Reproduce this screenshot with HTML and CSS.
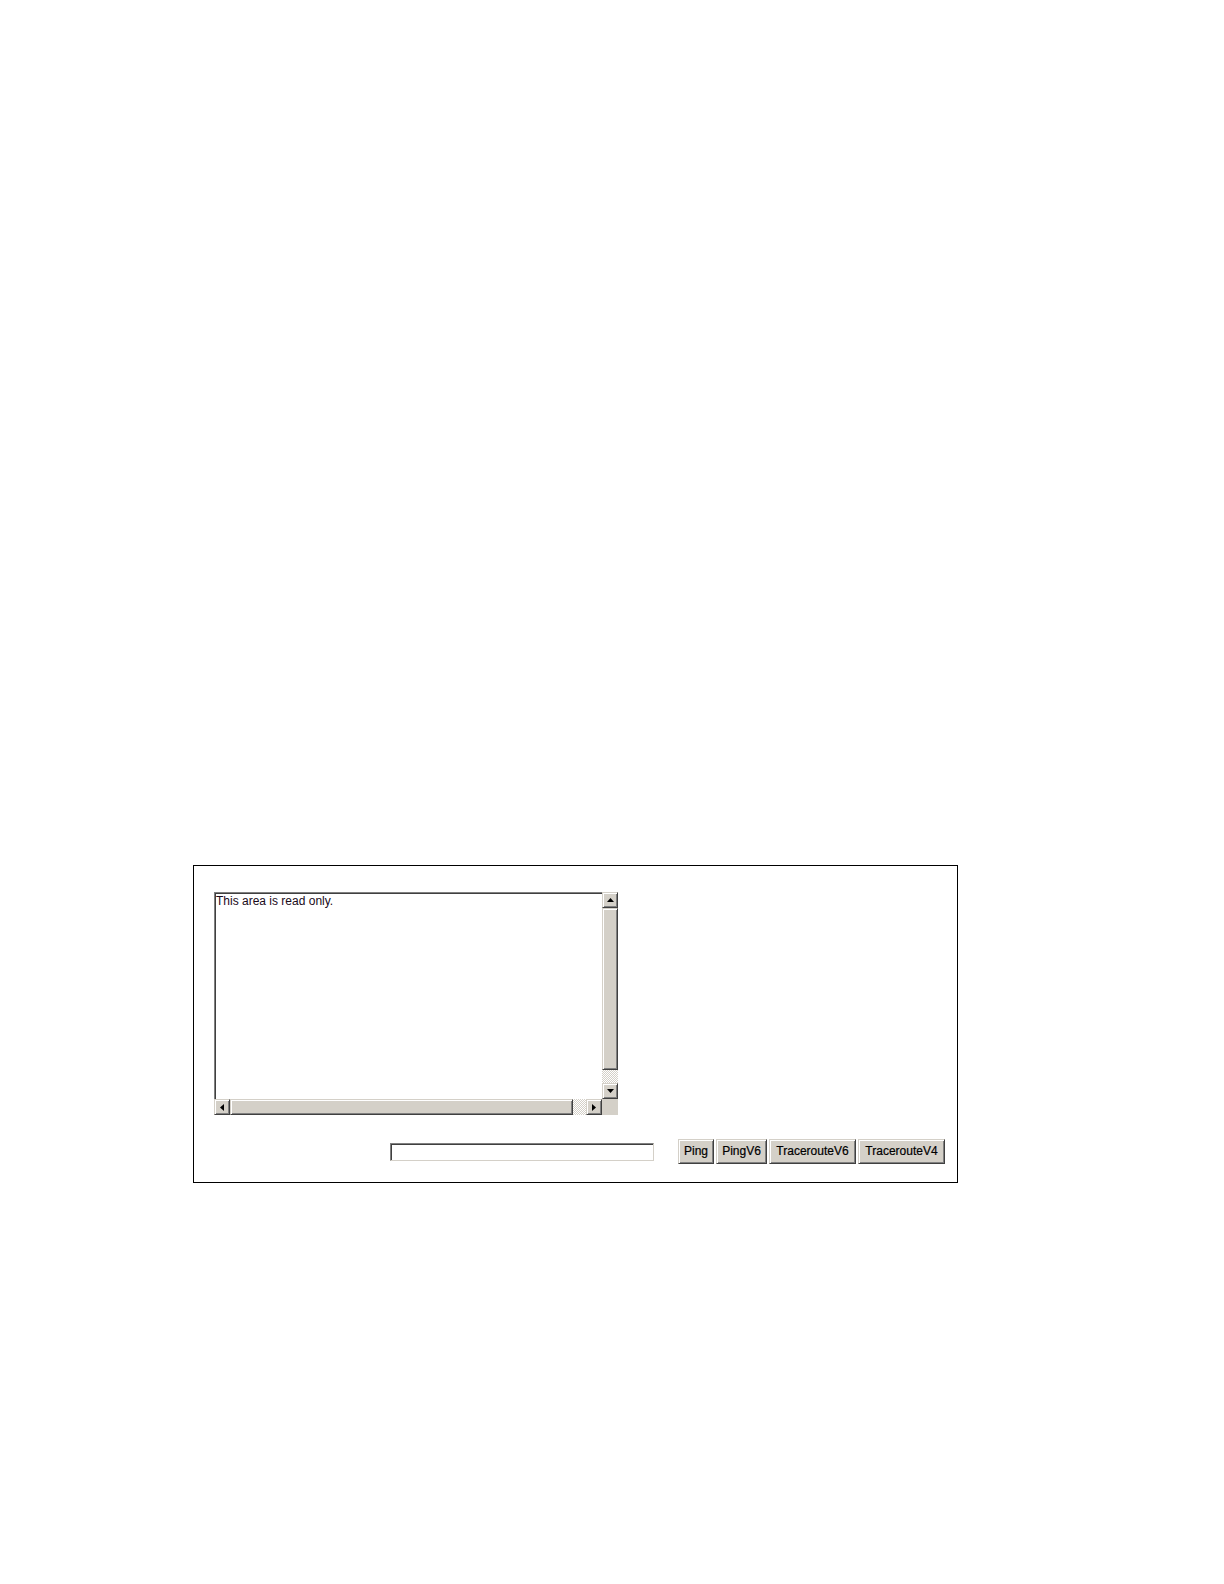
FILE: index.html
```html
<!DOCTYPE html>
<html>
<head>
<meta charset="utf-8">
<title>Ping / Traceroute</title>
<link rel="stylesheet" href="styles.css">
</head>
<body>
<div class="panel">
  <div class="textarea">
    <div class="ta-body">
      <div class="ta-content">This area is read only.</div>
      <div class="vscroll">
        <div class="sb-btn"><svg width="7" height="4" viewBox="0 0 7 4"><polygon points="3.5,0 7,4 0,4" fill="#000"/></svg></div>
        <div class="sb-thumb vthumb"></div>
        <div class="sb-track vtrack"></div>
        <div class="sb-btn"><svg width="7" height="4" viewBox="0 0 7 4"><polygon points="0,0 7,0 3.5,4" fill="#000"/></svg></div>
      </div>
    </div>
    <div class="hscroll">
      <div class="sb-btn"><svg width="4" height="7" viewBox="0 0 4 7"><polygon points="4,0 4,7 0,3.5" fill="#000"/></svg></div>
      <div class="sb-thumb hthumb"></div>
      <div class="sb-track htrack"></div>
      <div class="sb-btn"><svg width="4" height="7" viewBox="0 0 4 7"><polygon points="0,0 4,3.5 0,7" fill="#000"/></svg></div>
      <div class="corner"></div>
    </div>
  </div>
  <div class="controls">
    <input class="host" type="text">
    <div class="buttons">
      <button class="btn w-ping">Ping</button>
      <button class="btn w-pingv6">PingV6</button>
      <button class="btn w-trace">TracerouteV6</button>
      <button class="btn w-trace">TracerouteV4</button>
    </div>
  </div>
</div>
</body>
</html>
```
FILE: styles.css
```css
* { box-sizing: border-box; }
html, body { margin: 0; padding: 0; background: #fff; }
body { font-family: "Liberation Sans", Arial, sans-serif; font-size: 12px; color: #000; }

.panel {
  margin: 865px 0 0 193px;
  width: 765px;
  height: 318px;
  border: 1px solid #000;
  padding: 26px 0 0 20px;
}

.textarea {
  width: 404px;
  height: 223px;
  display: flex;
  flex-direction: column;
}
.ta-body { display: flex; height: 207px; }
.ta-content {
  flex: 1;
  border-top: 1px solid #808080;
  border-left: 1px solid #808080;
  box-shadow: inset 1px 1px 0 #404040;
  padding: 1px 0 0 1px;
  line-height: 14px;
  font-size: 12px;
  color: #1a0a1a;
  background: #fff;
}
.vscroll { width: 16px; display: flex; flex-direction: column; }
.hscroll { height: 16px; display: flex; }

.sb-btn, .sb-thumb, .btn {
  background: #d4d0c8;
  border: 1px solid;
  border-color: #d4d0c8 #404040 #404040 #d4d0c8;
  box-shadow: inset 1px 1px 0 #fff, inset -1px -1px 0 #808080;
}
.sb-btn {
  width: 16px; height: 16px;
  display: flex; align-items: center; justify-content: center;
  flex: none;
}
.sb-btn svg { display: block; }
.vthumb { height: 162px; flex: none; }
.vtrack { height: 13px; flex: none; }
.hthumb { width: 343px; flex: none; }
.htrack { width: 13px; flex: none; }
.sb-track {
  background-color: #fff;
  background-image: conic-gradient(#d4d0c8 25%, #fff 0 50%, #d4d0c8 0 75%, #fff 0);
  background-size: 2px 2px;
}
.corner { width: 16px; height: 16px; background: #d4d0c8; flex: none; }

.controls {
  margin-top: 24px;
  display: flex;
  align-items: center;
  height: 25px;
}
.host {
  margin: 1px 0 0 176px;
  width: 264px;
  height: 18px;
  padding: 0 2px;
  border: 1px solid;
  border-color: #808080 #d4d0c8 #d4d0c8 #808080;
  box-shadow: inset 1px 1px 0 #404040, inset -1px -1px 0 #fff;
  background: #fff;
  font-family: "Liberation Sans", Arial, sans-serif;
  font-size: 12px;
  outline: none;
}
.buttons { display: flex; gap: 2px; margin-left: 24px; }
.btn {
  height: 25px;
  padding: 0;
  font-family: "Liberation Sans", Arial, sans-serif;
  font-size: 12px;
  color: #000;
  line-height: 23px;
  text-align: center;
  border-radius: 0;
  -webkit-text-stroke: 0.2px #000;
}
.w-ping { width: 36px; }
.w-pingv6 { width: 51px; }
.w-trace { width: 87px; }
```
